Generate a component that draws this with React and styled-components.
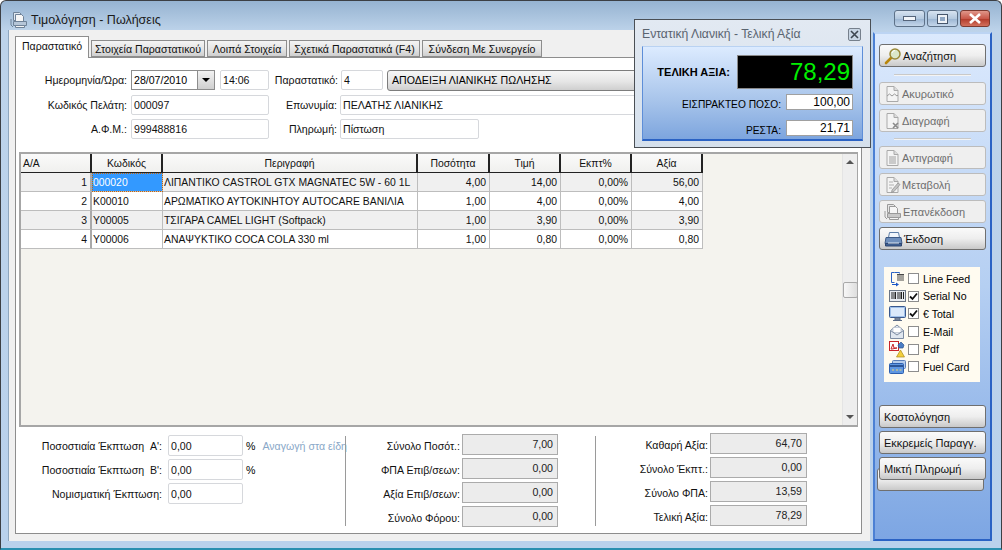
import React from 'react';
import styled, { createGlobalStyle } from 'styled-components';

const GlobalStyle = createGlobalStyle`
  html, body {
    margin: 0;
    padding: 0;
    background: #fff;
  }
  body {
    font-family: "Liberation Sans", Arial, sans-serif;
    font-size: 10.6px;
    color: #000;
  }
  * {
    box-sizing: border-box;
  }
`;

const Window = styled.div`
  position: relative;
  width: 1002px;
  height: 550px;
  display: flex;
  flex-direction: column;
  overflow: hidden;
  border-radius: 6px 6px 0 0;
  border: 1px solid #3c3f44;
  border-bottom: 2px solid #2a8fb0;
  background: linear-gradient(#96b3d1 0, #bdd3ea 30px, #b9d1ec 100%);
`;

const TitleBar = styled.div`
  height: 29px;
  flex: none;
  display: flex;
  align-items: flex-start;
  padding: 0 11px 0 9px;
`;

const TitleIcon = styled.div`
  margin: 10px 3px 0 0;
  display: flex;
`;

const TitleText = styled.div`
  margin-top: 11px;
  font-size: 12.5px;
  line-height: 16px;
  color: #1a1a1a;
`;

const WinButtons = styled.div`
  margin: 9px 0 0 auto;
  display: flex;
  gap: 2px;
`;

const WinButton = styled.div`
  width: ${({ $w }) => $w}px;
  height: 17px;
  border: 1px solid ${({ $close }) => ($close ? '#7c3a30' : '#5d7188')};
  border-radius: 3px;
  display: flex;
  align-items: center;
  justify-content: center;
  background: ${({ $close }) =>
    $close
      ? 'linear-gradient(#e0978a, #c9594a 50%, #b13a2a 52%, #d2705c)'
      : 'linear-gradient(#d7e3f0, #b4c9df 50%, #9bb5d2 52%, #c4d6ea)'};
`;

const Body = styled.div`
  flex: 1;
  min-height: 0;
  display: flex;
  padding: 0 9px 7px 7px;
`;

const Main = styled.div`
  width: 862px;
  flex: none;
  background: #f0f0f0;
  padding: 6px 8px 7px 6px;
  display: flex;
  flex-direction: column;
  border-left: 1px solid #8fa7bf;
`;

const Tabs = styled.div`
  display: flex;
  height: 21px;
  flex: none;
  gap: 2px;
  align-items: flex-end;
  position: relative;
  z-index: 1;
`;

const Tab = styled.div`
  width: ${({ $w }) => $w}px;
  height: ${({ $active }) => ($active ? '22px' : '17px')};
  margin-bottom: ${({ $active }) => ($active ? '-1px' : '0')};
  padding-bottom: ${({ $active }) => ($active ? '4px' : '0')};
  border: 1px solid #8d8d8d;
  border-bottom: ${({ $active }) => ($active ? 'none' : '1px solid #8d8d8d')};
  background: ${({ $active }) =>
    $active ? '#fff' : 'linear-gradient(#f4f4f4, #e4e4e4 55%, #cfcfcf)'};
  display: flex;
  align-items: center;
  justify-content: center;
  white-space: nowrap;
  color: #111;
`;

const TabPanel = styled.div`
  flex: 1;
  min-height: 0;
  background: #fff;
  border: 1px solid #8d8d8d;
  display: flex;
  flex-direction: column;
`;

const Form = styled.div`
  padding-top: 12px;
  display: flex;
  flex-direction: column;
  flex: none;
  height: 94px;
`;

const FormRow = styled.div`
  display: flex;
  align-items: center;
  height: 20px;
  margin-bottom: ${({ $mb }) => $mb}px;
`;

const Label = styled.div`
  width: ${({ $w }) => $w}px;
  flex: none;
  text-align: right;
  white-space: nowrap;
  color: #111;
  margin-right: ${({ $mr }) => $mr ?? 4}px;
  padding-top: ${({ $drop }) => $drop ?? 0}px;
`;

const Field = styled.div`
  width: ${({ $w }) => $w}px;
  height: ${({ $h }) => $h ?? 20}px;
  flex: none;
  margin-left: ${({ $ml }) => $ml ?? 0}px;
  border: 1px solid #d6d8dc;
  border-radius: 2px;
  background: #fff;
  padding: 0 2px;
  display: flex;
  align-items: center;
  white-space: nowrap;
  color: #111;
`;

const DateField = styled.div`
  width: 84px;
  height: 20px;
  flex: none;
  border: 1px solid #8d8d8d;
  display: flex;
  align-items: center;
  padding-left: 2px;
  justify-content: space-between;
`;

const DropButton = styled.div`
  width: 17px;
  height: 18px;
  background: linear-gradient(#f2f2f2, #cfcfcf);
  border-left: 1px solid #8d8d8d;
  display: flex;
  align-items: center;
  justify-content: center;
`;

const SelectBox = styled.div`
  width: 280px;
  height: 21px;
  flex: none;
  margin-left: 4px;
  border: 1px solid #7d7d7d;
  border-radius: 3px;
  background: linear-gradient(#f6f6f6, #e6e6e6 55%, #cfcfcf);
  display: flex;
  align-items: center;
  padding-left: 4px;
  white-space: nowrap;
`;

const Grid = styled.div`
  height: 275px;
  flex: none;
  margin: 0 3px;
  border: 2px solid #a6a6a6;
  border-right-width: 1px;
  background: #f4f3ee;
  display: flex;
  justify-content: space-between;
`;

const Table = styled.table`
  border-collapse: separate;
  border-spacing: 0;
  table-layout: fixed;
  width: 682px;
  height: 95px;
  font-size: 10.4px;
`;

const HeadCell = styled.th`
  width: ${({ $w }) => $w}px;
  height: 19px;
  padding: 0 2px;
  font-weight: normal;
  text-align: ${({ $left }) => ($left ? 'left' : 'center')};
  background: linear-gradient(#fafafa, #f0f0ee);
  border-right: 2px solid #222;
  border-bottom: 1px solid #222;
  color: #111;
`;

const Cell = styled.td`
  height: 19px;
  padding: 0 ${({ $right }) => ($right ? '3px' : '1px')} 0 ${({ $right }) => ($right ? '2px' : '1px')};
  text-align: ${({ $right }) => ($right ? 'right' : 'left')};
  background: ${({ $alt }) => ($alt ? '#f0f0f0' : '#fff')};
  border-right: 1px solid #bdbdbd;
  border-bottom: 1px solid #bdbdbd;
  white-space: nowrap;
  overflow: hidden;
  color: #111;
`;

const RowHead = styled(Cell)`
  border-right: 2px solid #a9a9a9;
`;

const SelectedCell = styled(Cell)`
  && {
    background: #3399ff;
    color: #fff;
  }
  outline: 1px dotted #c8660a;
  outline-offset: -1px;
`;

const ScrollBar = styled.div`
  width: 15px;
  flex: none;
  background: #eeeeee;
  display: flex;
  flex-direction: column;
  justify-content: space-between;
  align-items: center;
  border-left: 1px solid #e4e4e4;
  padding: 6px 0;
`;

const ScrollThumb = styled.div`
  width: 15px;
  height: 16px;
  border: 1px solid #a9a9a9;
  border-radius: 2px;
  background: linear-gradient(90deg, #f7f7f7, #dedede);
`;

const Arrow = styled.div`
  width: 0;
  height: 0;
  border-left: 4px solid transparent;
  border-right: 4px solid transparent;
  border-bottom: ${({ $up }) => ($up ? '4px solid #555' : 'none')};
  border-top: ${({ $up, $dark }) => ($up ? 'none' : `4px solid ${$dark ? '#000' : '#555'}`)};
`;

const Bottom = styled.div`
  flex: 1;
  display: flex;
  min-height: 0;
`;

const Column = styled.div`
  width: ${({ $w }) => $w}px;
  flex: none;
  padding-top: ${({ $top }) => $top}px;
  display: flex;
  flex-direction: column;
  gap: 3px;
`;

const BottomRow = styled.div`
  display: flex;
  align-items: center;
  height: 21px;
  white-space: nowrap;
`;

const Separator = styled.div`
  width: 1px;
  height: 90px;
  margin-top: 9px;
  flex: none;
  background: #9a9a9a;
  position: relative;
  z-index: 1;
`;

const TotalBox = styled.div`
  width: ${({ $w }) => $w}px;
  height: 21px;
  flex: none;
  border: 1px solid #ababab;
  background: #ececec;
  text-align: right;
  line-height: 18px;
  padding-right: 4px;
  color: #222;
`;

const Percent = styled.span`
  margin-left: 3px;
`;

const LinkText = styled.span`
  margin-left: 7px;
  color: #8aa8c8;
`;

const Sidebar = styled.div`
  width: 119px;
  flex: none;
  margin: 2px 0 0 3px;
  border-style: solid;
  border-width: 2px;
  border-color: #bcd4f3 #2a62c4 #2a62c4 #4b80d4;
  background: linear-gradient(#dbe9fd, #b5cff2 50%, #7da6e3);
  padding: 10px 5px 0 4px;
  position: relative;
  display: flex;
  flex-direction: column;
`;

const SideButton = styled.div`
  width: 107px;
  height: 23px;
  flex: none;
  margin-top: ${({ $mt }) => $mt ?? 4}px;
  border: 1px solid ${({ $off }) => ($off ? '#bcbcbc' : '#6f6f6f')};
  border-radius: 3px;
  background: ${({ $off }) =>
    $off ? '#efefef' : 'linear-gradient(#fafafa, #eeeeee 50%, #c9c9c9)'};
  color: ${({ $off }) => ($off ? '#6e6e6e' : '#111')};
  display: flex;
  align-items: center;
  gap: 1px;
  padding-left: 4px;
  font-size: 11px;
  white-space: nowrap;
  position: relative;
  z-index: 1;
`;

const HiddenButton = styled(SideButton)`
  position: absolute;
  left: 2px;
  top: 430px;
  z-index: 0;
`;

const SideRule = styled.div`
  width: 77px;
  height: 2px;
  flex: none;
  margin: ${({ $m }) => $m};
  background: #c9c9c9;
  border-bottom: 1px solid #f4f4f4;
`;

const OptionsPanel = styled.div`
  width: 96px;
  height: 115px;
  flex: none;
  margin: 17px 0 23px 5px;
  background: #fffbf0;
  padding: 3px 0 0 5px;
  display: flex;
  flex-direction: column;
`;

const OptionRow = styled.div`
  height: 17.6px;
  display: flex;
  align-items: center;
  white-space: nowrap;
`;

const OptionIcon = styled.div`
  width: 18px;
  display: flex;
  flex: none;
`;

const Check = styled.div`
  width: 11px;
  height: 11px;
  flex: none;
  margin: 0 4px 0 1px;
  border: 1px solid #8d8d8d;
  background: #fff;
  display: flex;
  align-items: center;
  justify-content: center;
`;

const Popup = styled.div`
  position: absolute;
  left: 633px;
  top: 18px;
  width: 237px;
  height: 129px;
  border: 1px solid #4a4f55;
  background: linear-gradient(#e2e9f2, #d5e0ec);
  padding: 0 7px 6px 7px;
  display: flex;
  flex-direction: column;
  z-index: 3;
`;

const PopupHead = styled.div`
  height: 26px;
  flex: none;
  display: flex;
  align-items: center;
  justify-content: space-between;
  padding: 2px 2px 0 0;
  font-size: 12.2px;
  color: #5a6470;
`;

const PopupClose = styled.div`
  width: 13px;
  height: 13px;
  border: 1px solid #76808c;
  border-radius: 2px;
  background: #c9d6e4;
  display: flex;
  align-items: center;
  justify-content: center;
`;

const PopupBody = styled.div`
  flex: 1;
  background: linear-gradient(#dcebff, #a6c3ea 60%, #7da5de);
  border-top: 1px solid #b9d2f2;
  border-left: 1px solid #5d8ed8;
  border-right: 1px solid #5d8ed8;
  border-bottom: 2px solid #2a62c4;
  padding: 8px 9px 0 0;
  display: flex;
  flex-direction: column;
`;

const PopupRow = styled.div`
  display: flex;
  align-items: center;
  justify-content: flex-end;
  margin-top: ${({ $mt }) => $mt ?? 0}px;
`;

const TotalLabel = styled.div`
  font-weight: bold;
  font-size: 11px;
  margin-right: 7px;
`;

const Display = styled.div`
  width: 116px;
  height: 34px;
  background: #000;
  border: 1px solid #8a8a8a;
  color: #00f000;
  font-size: 24px;
  line-height: 32px;
  text-align: right;
  padding-right: 2px;
`;

const PopupLabel = styled.div`
  font-size: 10.2px;
  margin-right: 5px;
  padding-top: 4px;
`;

const PopupValue = styled.div`
  width: 67px;
  height: 16px;
  background: #fff;
  border: 1px solid #a0a0a0;
  font-size: 12px;
  line-height: 15px;
  text-align: right;
  padding-right: 2px;
`;

/* icons */
const DocBase = ({ children }) => (
  <svg width="17" height="18" viewBox="0 0 17 18">
    <path d="M3 1.500h7l4 4v11H3z" fill="#f4f4f4" stroke="#a9a9a9" />
    <path d="M10 1.500v4h4" fill="#dcdcdc" stroke="#a9a9a9" />
    {children}
  </svg>
);

const VoidIcon = () => (
  <DocBase>
    <path d="M3 11l2.500-2 2.500 2 2.500-2 2.500 2 1-1" fill="none" stroke="#9a9a9a" />
  </DocBase>
);

const DeleteIcon = () => (
  <DocBase>
    <path d="M9 11l5 5M14 11l-5 5" stroke="#8a8a8a" strokeWidth="1.600" />
  </DocBase>
);

const CopyIcon = () => (
  <DocBase>
    <path d="M5 8h7M5 10h7M5 12h7M5 14h7" stroke="#a0a0a0" />
  </DocBase>
);

const EditIcon = () => (
  <DocBase>
    <path d="M5 6h4M5 9h5M5 12h3" stroke="#b0b0b0" />
    <path d="M8 14l6-7 2 1.500-6 7-2.500 1z" fill="#c4c4c4" stroke="#8c8c8c" strokeWidth=".7" />
  </DocBase>
);

const PrintDocs = ({ tone = '#9a9a9a', fill = '#e6e6e6', body = '#c8c8c8' }) => (
  <svg width="18" height="18" viewBox="0 0 18 18">
    <path d="M3.500 1.500h6l2 2v6h-8z" fill={fill} stroke={tone} />
    <path d="M5.500 3.500h6l2 2v5h-8z" fill="#f6f6f6" stroke={tone} />
    <path d="M3.500 10.500h13v4h-13z" fill={body} stroke={tone} />
    <path d="M5.500 14.500h9v2h-9z" fill="#f4f4f4" stroke={tone} />
    <path d="M1 8v6l2 2" fill="none" stroke={tone} />
  </svg>
);

const SearchIcon = () => (
  <svg width="18" height="18" viewBox="0 0 18 18">
    <path d="M2 16l5-5" stroke="#b8860b" strokeWidth="2.600" strokeLinecap="round" />
    <circle cx="11" cy="7" r="5" fill="#dbe7c9" stroke="#9a8a3a" strokeWidth="1.500" />
    <path d="M8 6a3 3 0 0 1 3-2.500" fill="none" stroke="#fff" />
  </svg>
);

const PrinterIcon = () => (
  <svg width="19" height="18" viewBox="0 0 19 18">
    <path d="M5.500 2.500h9l1 5h-11z" fill="#f2f6fb" stroke="#5e7ea8" />
    <path d="M2 7.500h15l1 6H1z" fill="#6f8fbc" stroke="#3e5a86" />
    <path d="M1.500 13.500h16v2.500h-16z" fill="#3e5f92" stroke="#2e4670" />
    <path d="M4 13h11" stroke="#dfe8f4" />
  </svg>
);

const LineFeedIcon = () => (
  <svg width="17" height="16" viewBox="0 0 17 16">
    <path d="M5.500 1.500h-3v10h3M5.500 1.500h5v1" fill="none" stroke="#2a62c4" />
    <path d="M8 5h7M8 7h7M8 9h7M8 3.500h7" stroke="#333" strokeWidth=".9" />
    <path d="M3 13h4v-1.500l3 2-3 2V14H3z" fill="#1b56c8" />
  </svg>
);

const BarcodeIcon = () => (
  <svg width="17" height="12" viewBox="0 0 17 12">
    <rect x=".5" y=".5" width="16" height="11" fill="#e8ecf2" stroke="#6b7686" />
    <path d="M3 2v7M5 2v7M6.500 2v7M9 2v7M11 2v7M12.500 2v7M14.500 2v7" stroke="#222" />
  </svg>
);

const MonitorIcon = () => (
  <svg width="17" height="16" viewBox="0 0 17 16">
    <rect x=".5" y=".5" width="16" height="11" rx="1" fill="#9fc0ea" stroke="#39578c" />
    <rect x="2" y="2" width="13" height="8" fill="#dbe9fb" />
    <path d="M6 12h5v2H6zM4 14.500h9" fill="#8d9cb4" stroke="#5a6a84" />
  </svg>
);

const MailIcon = () => (
  <svg width="16" height="16" viewBox="0 0 16 16">
    <path d="M1.500 6.500L8 1l6.500 5.500v8h-13z" fill="#dfe6ef" stroke="#7d8ca3" />
    <path d="M4 3.500h8v5H4z" fill="#fff" stroke="#a9b4c4" strokeWidth=".6" />
    <path d="M1.500 6.500L8 11l6.500-4.500" fill="none" stroke="#7d8ca3" />
  </svg>
);

const PdfIcon = () => (
  <svg width="17" height="17" viewBox="0 0 17 17">
    <rect x=".5" y=".5" width="9" height="9" fill="#fff" stroke="#c8242a" />
    <path d="M2 8l2-5 1 4 3 0-5 1z" fill="none" stroke="#c8242a" />
    <path d="M9 4l3-3 3 3-1 3h-4z" fill="#4a7cc4" stroke="#2e548e" strokeWidth=".7" />
    <path d="M11.500 9l4 7h-8z" fill="#f3cf3c" stroke="#a98a1c" strokeWidth=".7" />
  </svg>
);

const CardIcon = () => (
  <svg width="17" height="14" viewBox="0 0 17 14">
    <rect x="3.500" y=".5" width="13" height="8" rx="1" fill="#b6cdec" stroke="#5c80ba" />
    <rect x=".5" y="3.500" width="14" height="10" rx="1" fill="#5f97e2" stroke="#2d5fae" />
    <path d="M1 6h13" stroke="#1d3f7c" strokeWidth="1.500" />
    <path d="M3 10h2M7 10h2M10.500 10h2" stroke="#f0d66a" />
  </svg>
);

const CheckMark = () => (
  <svg width="9" height="9" viewBox="0 0 9 9">
    <path d="M1 4.500l2.500 2.500L8 1.500" fill="none" stroke="#111" strokeWidth="1.800" />
  </svg>
);

const rows = [
  ['1', '000020', 'ΛΙΠΑΝΤΙΚΟ CASTROL GTX MAGNATEC 5W - 60 1L', '4,00', '14,00', '0,00%', '56,00'],
  ['2', 'K00010', 'ΑΡΩΜΑΤΙΚΟ ΑΥΤΟΚΙΝΗΤΟΥ AUTOCARE ΒΑΝΙΛΙΑ', '1,00', '4,00', '0,00%', '4,00'],
  ['3', 'Y00005', 'ΤΣΙΓΑΡΑ CAMEL LIGHT (Softpack)', '1,00', '3,90', '0,00%', '3,90'],
  ['4', 'Y00006', 'ΑΝΑΨΥΚΤΙΚΟ COCA COLA 330 ml', '1,00', '0,80', '0,00%', '0,80'],
];

const columns = [
  ['Α/Α', 71, true],
  ['Κωδικός', 71],
  ['Περιγραφή', 255],
  ['Ποσότητα', 72],
  ['Τιμή', 71],
  ['Εκπτ%', 71],
  ['Αξία', 71],
];

const tabs = [
  ['Παραστατικό', 74, true],
  ['Στοιχεία Παραστατικού', 114],
  ['Λοιπά Στοιχεία', 80],
  ['Σχετικά Παραστατικά (F4)', 131],
  ['Σύνδεση Με Συνεργείο', 120],
];

const options = [
  ['Line Feed', <LineFeedIcon />, false],
  ['Serial No', <BarcodeIcon />, true],
  ['€ Total', <MonitorIcon />, true],
  ['E-Mail', <MailIcon />, false],
  ['Pdf', <PdfIcon />, false],
  ['Fuel Card', <CardIcon />, false],
];

const App = () => (
  <>
    <GlobalStyle />
    <Window>
      <TitleBar>
        <TitleIcon>
          <PrintDocs tone="#6f8298" fill="#dfe7f0" body="#b6c6d8" />
        </TitleIcon>
        <TitleText>Τιμολόγηση - Πωλήσεις</TitleText>
        <WinButtons>
          <WinButton $w={31}>
            <svg width="13" height="7" viewBox="0 0 13 7">
              <rect x=".5" y="1.500" width="12" height="4" fill="#f2f5f9" stroke="#56657a" />
            </svg>
          </WinButton>
          <WinButton $w={31}>
            <svg width="11" height="10" viewBox="0 0 11 10">
              <rect x=".5" y=".5" width="10" height="9" fill="#eef2f7" stroke="#46566c" />
              <rect x="3" y="3" width="5" height="4" fill="#8fa7c4" />
            </svg>
          </WinButton>
          <WinButton $w={30} $close>
            <svg width="14" height="11" viewBox="0 0 14 11">
              <path d="M2 1l10 9M12 1L2 10" stroke="#fff" strokeWidth="2.600" />
            </svg>
          </WinButton>
        </WinButtons>
      </TitleBar>

      <Body>
        <Main>
          <Tabs>
            {tabs.map(([name, w, active]) => (
              <Tab key={name} $w={w} $active={active}>
                {name}
              </Tab>
            ))}
          </Tabs>
          <TabPanel>
            <Form>
              <FormRow $mb={5}>
                <Label $w={111}>Ημερομηνία/Ώρα:</Label>
                <DateField>
                  28/07/2010
                  <DropButton>
                    <Arrow $dark />
                  </DropButton>
                </DateField>
                <Field $w={49} $ml={5}>
                  14:06
                </Field>
                <Label $w={69} $mr={3}>
                  Παραστατικό:
                </Label>
                <Field $w={42}>4</Field>
                <SelectBox>ΑΠΟΔΕΙΞΗ ΛΙΑΝΙΚΗΣ ΠΩΛΗΣΗΣ</SelectBox>
              </FormRow>
              <FormRow $mb={4}>
                <Label $w={111}>Κωδικός Πελάτη:</Label>
                <Field $w={138}>000097</Field>
                <Label $w={68} $mr={3}>
                  Επωνυμία:
                </Label>
                <Field $w={320}>ΠΕΛΑΤΗΣ ΛΙΑΝΙΚΗΣ</Field>
              </FormRow>
              <FormRow>
                <Label $w={111}>Α.Φ.Μ.:</Label>
                <Field $w={138}>999488816</Field>
                <Label $w={68} $mr={3}>
                  Πληρωμή:
                </Label>
                <Field $w={139}>Πίστωση</Field>
              </FormRow>
            </Form>

            <Grid>
              <Table>
                <thead>
                  <tr>
                    {columns.map(([name, w, left]) => (
                      <HeadCell key={name} $w={w} $left={left}>
                        {name}
                      </HeadCell>
                    ))}
                  </tr>
                </thead>
                <tbody>
                  {rows.map((row, i) => {
                    const alt = i % 2 === 0;
                    return (
                      <tr key={row[0]}>
                        <RowHead $right $alt={alt}>
                          {row[0]}
                        </RowHead>
                        {i === 0 ? <SelectedCell>{row[1]}</SelectedCell> : <Cell $alt={alt}>{row[1]}</Cell>}
                        <Cell $alt={alt}>{row[2]}</Cell>
                        <Cell $right $alt={alt}>
                          {row[3]}
                        </Cell>
                        <Cell $right $alt={alt}>
                          {row[4]}
                        </Cell>
                        <Cell $right $alt={alt}>
                          {row[5]}
                        </Cell>
                        <Cell $right $alt={alt}>
                          {row[6]}
                        </Cell>
                      </tr>
                    );
                  })}
                </tbody>
              </Table>
              <ScrollBar>
                <Arrow $up />
                <ScrollThumb />
                <Arrow />
              </ScrollBar>
            </Grid>

            <Bottom>
              <Column $w={329} $top={8}>
                <BottomRow>
                  <Label $w={146} $mr={6}>
                    Ποσοστιαία Έκπτωση &nbsp;Α':
                  </Label>
                  <Field $w={75} $h={21}>
                    0,00
                  </Field>
                  <Percent>%</Percent>
                  <LinkText>Αναγωγή στα είδη</LinkText>
                </BottomRow>
                <BottomRow>
                  <Label $w={146} $mr={6}>
                    Ποσοστιαία Έκπτωση &nbsp;Β':
                  </Label>
                  <Field $w={75} $h={21}>
                    0,00
                  </Field>
                  <Percent>%</Percent>
                </BottomRow>
                <BottomRow>
                  <Label $w={146} $mr={6}>
                    Νομισματική Έκπτωση:
                  </Label>
                  <Field $w={75} $h={21}>
                    0,00
                  </Field>
                </BottomRow>
              </Column>
              <Separator />
              <Column $w={249} $top={7}>
                {[
                  ['Σύνολο Ποσότ.:', '7,00'],
                  ['ΦΠΑ Επιβ/σεων:', '0,00'],
                  ['Αξία Επιβ/σεων:', '0,00'],
                  ['Σύνολο Φόρου:', '0,00'],
                ].map(([name, value]) => (
                  <BottomRow key={name}>
                    <Label $w={114} $mr={2} $drop={3}>
                      {name}
                    </Label>
                    <TotalBox $w={96}>{value}</TotalBox>
                  </BottomRow>
                ))}
              </Column>
              <Separator />
              <Column $w={220} $top={6}>
                {[
                  ['Καθαρή Αξία:', '64,70'],
                  ['Σύνολο Έκπτ.:', '0,00'],
                  ['Σύνολο ΦΠΑ:', '13,59'],
                  ['Τελική Αξία:', '78,29'],
                ].map(([name, value]) => (
                  <BottomRow key={name}>
                    <Label $w={112} $mr={2} $drop={3}>
                      {name}
                    </Label>
                    <TotalBox $w={97}>{value}</TotalBox>
                  </BottomRow>
                ))}
              </Column>
            </Bottom>
          </TabPanel>
        </Main>

        <Sidebar>
          <SideButton $mt={0}>
            <SearchIcon />
            Αναζήτηση
          </SideButton>
          <SideRule $m="7px 0 6px 15px" />
          <SideButton $mt={0} $off>
            <VoidIcon />
            Ακυρωτικό
          </SideButton>
          <SideButton $off>
            <DeleteIcon />
            Διαγραφή
          </SideButton>
          <SideRule $m="6px 0 6px 15px" />
          <SideButton $mt={0} $off>
            <CopyIcon />
            Αντιγραφή
          </SideButton>
          <SideButton $off>
            <EditIcon />
            Μεταβολή
          </SideButton>
          <SideButton $off>
            <PrintDocs />
            Επανέκδοση
          </SideButton>
          <SideButton>
            <PrinterIcon />
            Έκδοση
          </SideButton>

          <OptionsPanel>
            {options.map(([name, icon, checked]) => (
              <OptionRow key={name}>
                <OptionIcon>{icon}</OptionIcon>
                <Check>{checked && <CheckMark />}</Check>
                {name}
              </OptionRow>
            ))}
          </OptionsPanel>

          <SideButton $mt={0}>Κοστολόγηση</SideButton>
          <SideButton $mt={3}>Εκκρεμείς Παραγγ.</SideButton>
          <SideButton $mt={3}>Μικτή Πληρωμή</SideButton>
          <HiddenButton />
        </Sidebar>
      </Body>

      <Popup>
        <PopupHead>
          Εντατική Λιανική - Τελική Αξία
          <PopupClose>
            <svg width="9" height="9" viewBox="0 0 9 9">
              <path d="M1 1l7 7M8 1L1 8" stroke="#3d4650" strokeWidth="1.600" />
            </svg>
          </PopupClose>
        </PopupHead>
        <PopupBody>
          <PopupRow>
            <TotalLabel>ΤΕΛΙΚΗ ΑΞΙΑ:</TotalLabel>
            <Display>78,29</Display>
          </PopupRow>
          <PopupRow $mt={5}>
            <PopupLabel>ΕΙΣΠΡΑΚΤΕΟ ΠΟΣΟ:</PopupLabel>
            <PopupValue>100,00</PopupValue>
          </PopupRow>
          <PopupRow $mt={10}>
            <PopupLabel>ΡΕΣΤΑ:</PopupLabel>
            <PopupValue>21,71</PopupValue>
          </PopupRow>
        </PopupBody>
      </Popup>
    </Window>
  </>
);

export default App;
